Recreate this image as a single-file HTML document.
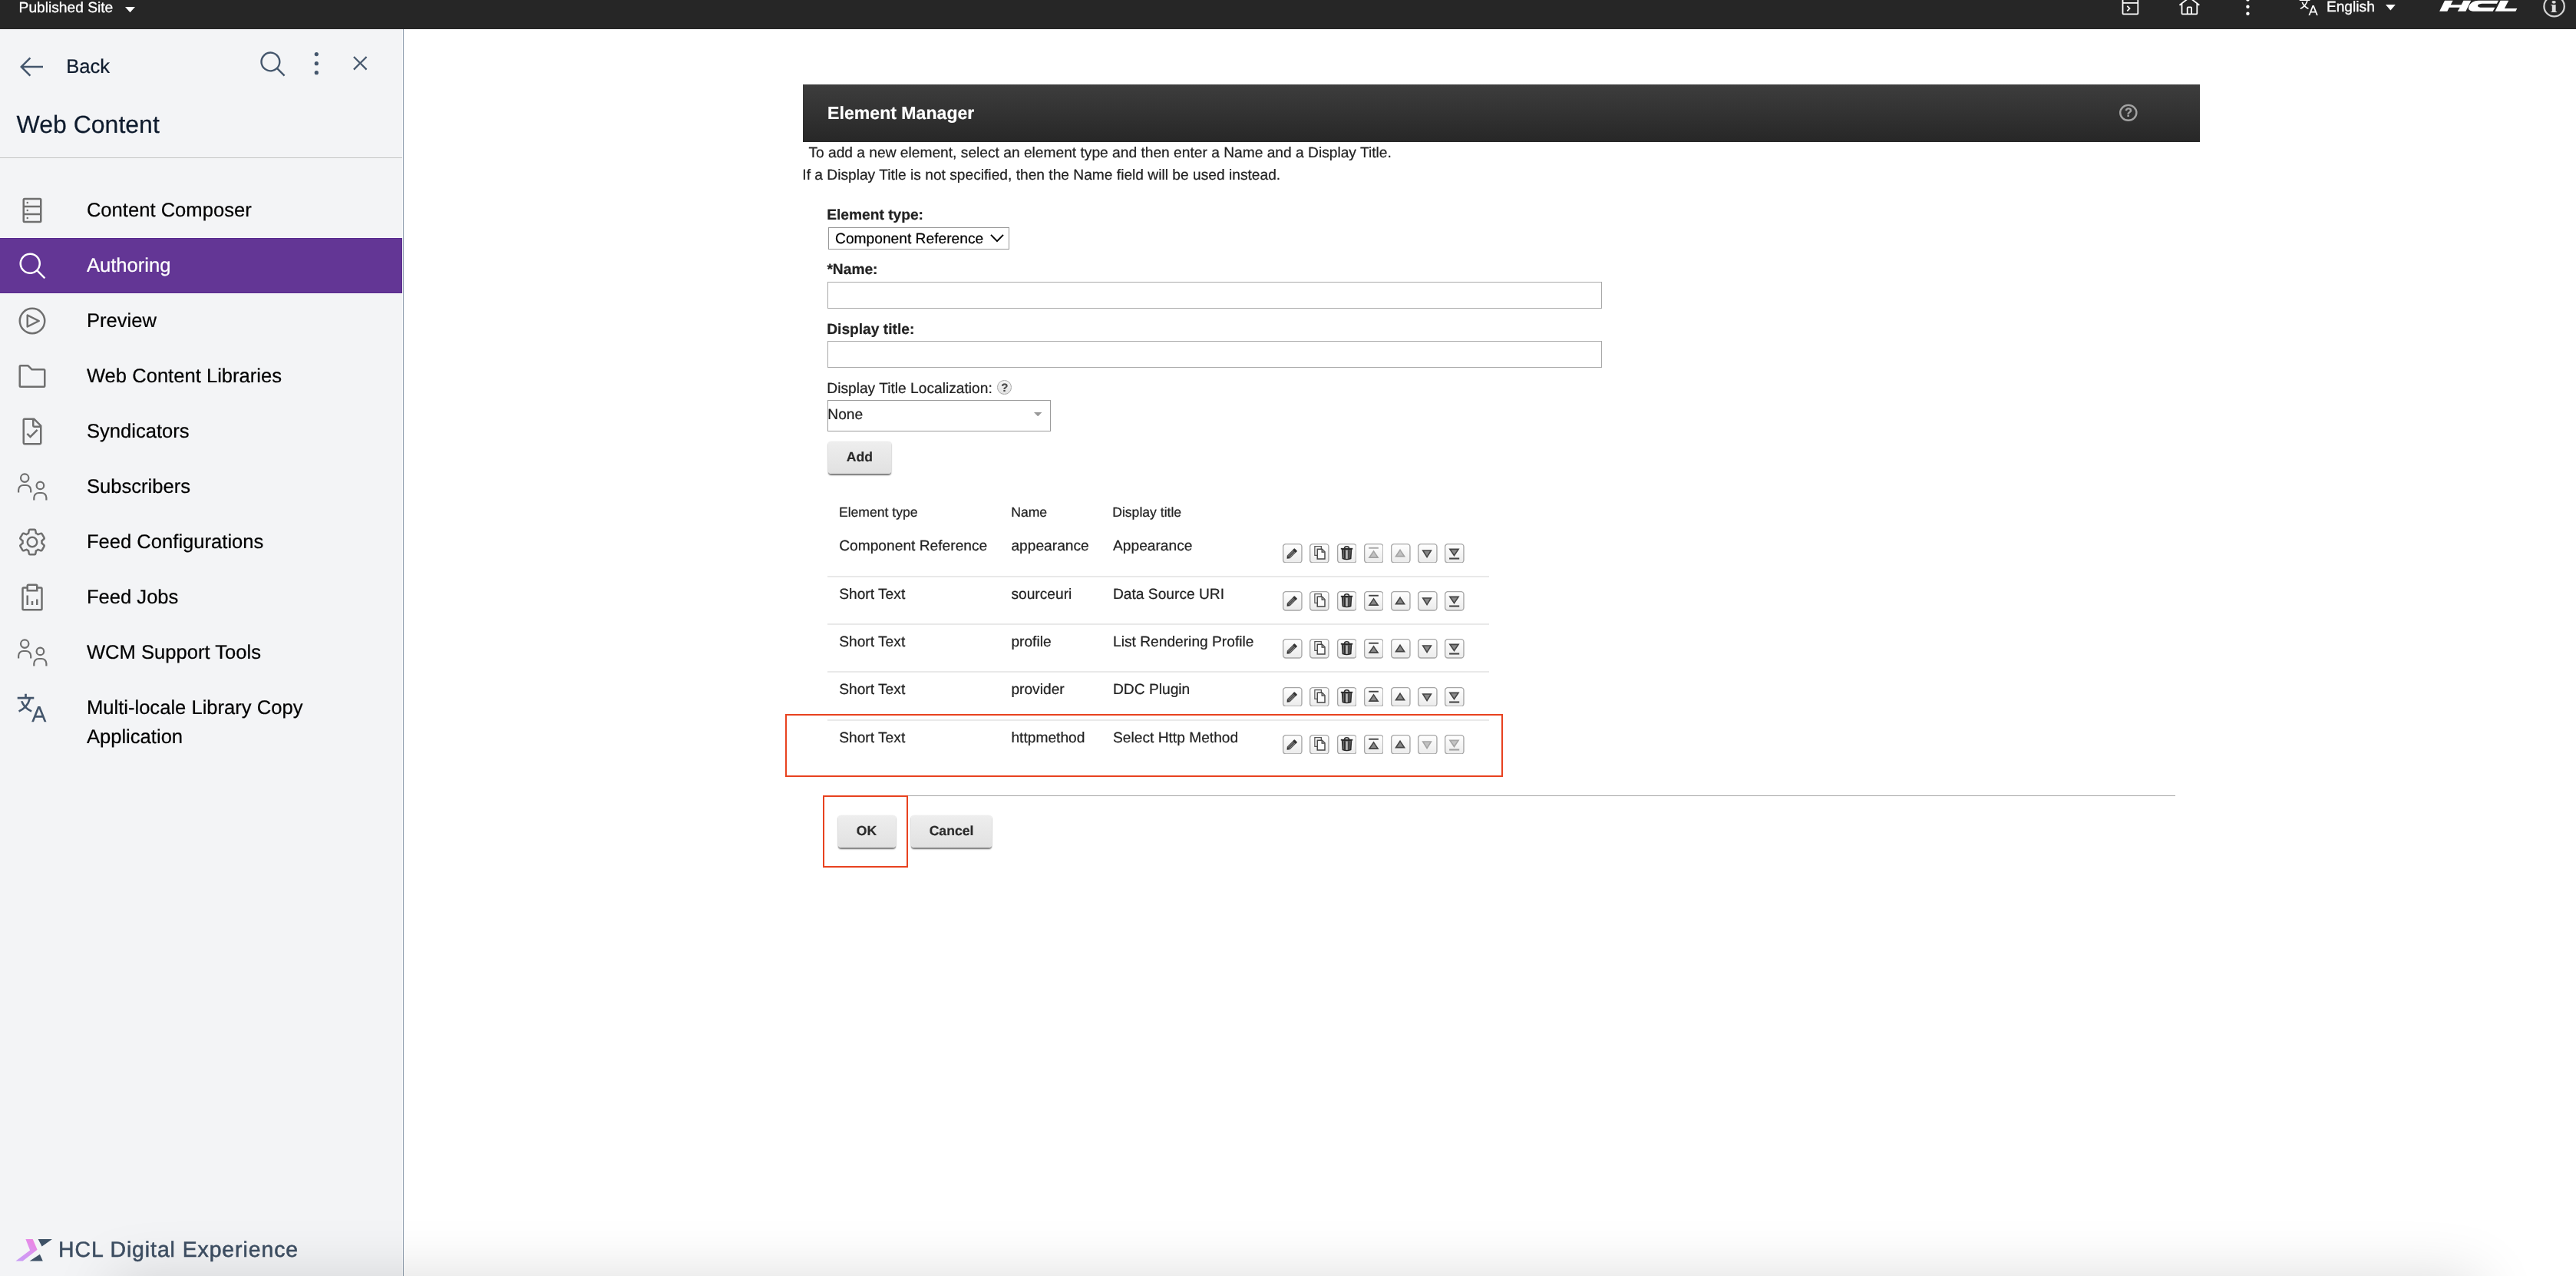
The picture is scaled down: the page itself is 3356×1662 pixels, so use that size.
<!DOCTYPE html>
<html lang="en">
<head>
<meta charset="utf-8">
<title>Element Manager - HCL Digital Experience</title>
<style>
html,body{margin:0;padding:0;}
body{width:3356px;height:1662px;overflow:hidden;position:relative;background:#fff;font-family:"Liberation Sans",sans-serif;color:#222;text-rendering:geometricPrecision;-webkit-text-stroke:0.22px;}
*{box-sizing:border-box;}
.abs{position:absolute;}
#page{position:absolute;left:0;top:0;width:3356px;height:1662px;overflow:hidden;will-change:transform;}
#topbar{position:absolute;left:0;top:0;width:3356px;height:37.6px;background:#262626;overflow:hidden;}
#sidebar{position:absolute;left:0;top:37.6px;width:526.1px;height:1624.4px;background:#f3f4f6;border-right:1.2px solid #93a1b1;box-shadow:inset -0.9px 0 0 #f9fafb;}
#sidebar .row{position:absolute;left:0;width:523px;height:72px;}
#sidebar .row.sel{background:#5f3694;}
.btn{position:absolute;height:42px;border-radius:4px;background:linear-gradient(#eeeeee,#e1e1e1);box-shadow:0 1.6px 1.8px rgba(0,0,0,.55);
 font-weight:bold;font-size:17.6px;color:#2a2a2a;text-shadow:0 1.2px 0 rgba(255,255,255,.85);text-align:center;line-height:40.2px;}
.ib{position:absolute;width:25.6px;height:25.6px;}
.inp{position:absolute;background:#fff;border:1.3px solid #a9a9a9;}
.sep{position:absolute;left:1078px;width:862px;height:2.2px;background:#e9e9e9;}
.red{position:absolute;border:2.2px solid #e8421f;}
</style>
</head>
<body>
<div id="page">

<div id="topbar">
<div class="t" style="position:absolute;left:24.60px;top:-1.17px;font-size:19.2px;line-height:23.04px;color:#fff;white-space:nowrap;-webkit-text-stroke:0.3px #fff;">Published Site</div>
<svg class="abs" style="left:163px;top:8.6px" width="13" height="7.2" viewBox="0 0 13 7.2"><path d="M0 0h13L6.5 7.2z" fill="#fff"/></svg>
<svg style="position:absolute;left:2760.90px;top:-5.90px;" width="28.8" height="28.8" viewBox="0 0 32 32" fill="#fff"><path d="M26,4.01H6a2,2,0,0,0-2,2v20a2,2,0,0,0,2,2H26a2,2,0,0,0,2-2v-20A2,2,0,0,0,26,4.01Zm0,2v4H6v-4Zm-20,20v-14H26v14Z"/><path d="M10.76 16.18L13.58 19.01 10.76 21.84 12.17 23.25 16.41 19.01 12.17 14.77 10.76 16.18z"/></svg>
<svg style="position:absolute;left:2837.70px;top:-5.90px;" width="28.8" height="28.8" viewBox="0 0 32 32" fill="#fff"><path d="M16.612,2.214a1.01,1.01,0,0,0-1.242,0L1,13.419l1.243,1.572L4,13.621V26a2.004,2.004,0,0,0,2,2H26a2.004,2.004,0,0,0,2-2V13.63L29.757,15,31,13.428ZM18,26H14V18h4Zm2,0V18a2.002,2.002,0,0,0-2-2H14a2.002,2.002,0,0,0-2,2v8H6V12.062l10-7.79,10,7.8V26Z"/></svg>
<svg class="abs" style="left:2924px;top:-4px" width="9" height="26" viewBox="0 0 9 26" fill="#fff"><circle cx="4.4" cy="3.6" r="2.2"/><circle cx="4.4" cy="12.7" r="2.2"/><circle cx="4.4" cy="21.8" r="2.2"/></svg>
<svg style="position:absolute;left:2993.60px;top:-5.50px;" width="27.5" height="27.5" viewBox="0 0 32 32" fill="#fff"><path d="M27.85 29H30L24 14H21.65l-6 15H17.8l1.6-4h6.85zM20.2 23l2.62-6.56L25.45 23zM18 7V5H11V2H9V5H2V7H12.74a14.71 14.71 0 0 1-3.19 6.18A13.5 13.5 0 0 1 7.26 9H5.16a16.47 16.47 0 0 0 3 5.58A16.84 16.84 0 0 1 3 18l.75 1.86A18.47 18.47 0 0 0 9.53 16a16.92 16.92 0 0 0 5.76 3.84L16 18a14.48 14.48 0 0 1-5.12-3.37A17.64 17.64 0 0 0 14.8 7z"/></svg>
<div class="t" style="position:absolute;left:3030.90px;top:-1.77px;font-size:19.2px;line-height:23.04px;color:#fff;white-space:nowrap;-webkit-text-stroke:0.3px #fff;">English</div>
<svg class="abs" style="left:3108.2px;top:6.1px" width="12.8" height="7.5" viewBox="0 0 12.8 7.5"><path d="M0 0h12.8L6.4 7.5z" fill="#fff"/></svg>
<svg class="abs" style="left:3160px;top:0" width="140" height="20" viewBox="0 0 1839.6 262.8" fill="#fff"><path d="M238 195L328 10H468L430 82H612L650 10H778L688 195H548L588 128H405L372 195Z"/><path d="M905 10H1248L1221 62H985C925 62 899 74 894 96C891 120 920 129 975 129H1188L1152 195H840C752 195 722 162 742 112C765 48 830 10 905 10Z"/><path d="M1190 195L1282 10H1422L1352 145H1568L1542 195Z"/></svg>
<svg class="abs" style="left:3311px;top:-8px" width="34" height="34" viewBox="0 0 34 34"><circle cx="16.6" cy="16.2" r="13.2" fill="none" stroke="#d2d2d2" stroke-width="2.3"/></svg>
<div class="abs" style="left:3320.4px;top:-5.4px;width:14px;text-align:center;font-family:'Liberation Serif',serif;font-weight:bold;font-size:21.5px;line-height:28px;color:#dcdcdc;transform:scaleX(1.45);">i</div>
</div>
<div id="sidebar">
</div>
<svg style="position:absolute;left:21.20px;top:67.00px;" width="40" height="40" viewBox="0 0 32 32" fill="#44566c"><path d="M14 26L15.41 24.59 7.83 17 28 17 28 15 7.83 15 15.41 7.41 14 6 4 16 14 26z"/></svg>
<div class="t" style="position:absolute;left:86.20px;top:72.17px;font-size:25.6px;line-height:30.72px;color:#0e1b2d;white-space:nowrap;">Back</div>
<svg style="position:absolute;left:336.80px;top:65.20px;" width="38" height="38" viewBox="0 0 32 32" fill="#44566c"><path d="M29,27.5859l-7.5521-7.5521a11.0177,11.0177,0,1,0-1.4141,1.4141L27.5859,29ZM4,13a9,9,0,1,1,9,9A9.01,9.01,0,0,1,4,13Z"/></svg>
<svg class="abs" style="left:407px;top:66px" width="11" height="33" viewBox="0 0 11 33" fill="#44566c"><circle cx="5.3" cy="4.6" r="2.6"/><circle cx="5.3" cy="16.7" r="2.6"/><circle cx="5.3" cy="28.7" r="2.6"/></svg>
<svg style="position:absolute;left:451.15px;top:64.40px;" width="36.5" height="36.5" viewBox="0 0 32 32" fill="#44566c"><path d="M24 9.4L22.6 8 16 14.6 9.4 8 8 9.4 14.6 16 8 22.6 9.4 24 16 17.4 22.6 24 24 22.6 17.4 16 24 9.4z"/></svg>
<div class="t" style="position:absolute;left:21.60px;top:142.81px;font-size:32px;line-height:38.4px;color:#0e1b2d;white-space:nowrap;">Web Content</div>
<div class="abs" style="left:0;top:204.9px;width:524px;height:1.1px;background:#c5c5c5"></div>
<div class="abs" style="left:0;top:309px;width:523.8px;height:73.9px;background:#633695;border-top:1px solid #fcfcfd;border-bottom:1.1px solid #fcfcfd;box-shadow:inset -1px 0 0 #57298d,inset 0 1px 0 #57298d,inset 0 -1px 0 #57298d;"></div>
<svg style="position:absolute;left:22.20px;top:254.00px;" width="40" height="40" viewBox="0 0 32 32" fill="#6f6f6f"><path d="M24,3H8A2,2,0,0,0,6,5V27a2,2,0,0,0,2,2H24a2,2,0,0,0,2-2V5A2,2,0,0,0,24,3Zm0,2v6H8V5ZM8,19V13H24v6Zm0,8V21H24v6Z"/><circle cx="11" cy="8" r="1"/><circle cx="11" cy="16" r="1"/><circle cx="11" cy="24" r="1"/></svg>
<div class="t" style="position:absolute;left:112.90px;top:258.97px;font-size:25.6px;line-height:30.72px;color:#000;white-space:nowrap;">Content Composer</div>
<svg style="position:absolute;left:23.30px;top:327.40px;" width="40" height="40" viewBox="0 0 32 32" fill="#fff"><path d="M29,27.5859l-7.5521-7.5521a11.0177,11.0177,0,1,0-1.4141,1.4141L27.5859,29ZM4,13a9,9,0,1,1,9,9A9.01,9.01,0,0,1,4,13Z"/></svg>
<div class="t" style="position:absolute;left:112.90px;top:330.97px;font-size:25.6px;line-height:30.72px;color:#fff;white-space:nowrap;">Authoring</div>
<svg style="position:absolute;left:22.20px;top:398.00px;" width="40" height="40" viewBox="0 0 32 32" fill="#6f6f6f"><path d="M11,23a1,1,0,0,1-1-1V10a1,1,0,0,1,1.4473-.8945l12,6a1,1,0,0,1,0,1.789l-12,6A1.001,1.001,0,0,1,11,23Zm1-11.3821v8.7642L20.7642,16Z"/><path d="M16,4A12,12,0,1,1,4,16,12,12,0,0,1,16,4m0-2A14,14,0,1,0,30,16,14,14,0,0,0,16,2Z"/></svg>
<div class="t" style="position:absolute;left:112.90px;top:402.97px;font-size:25.6px;line-height:30.72px;color:#000;white-space:nowrap;">Preview</div>
<svg style="position:absolute;left:22.20px;top:470.00px;" width="40" height="40" viewBox="0 0 32 32" fill="#6f6f6f"><path d="M11.17,6l3.42,3.41.58.59H28V26H4V6h7.17m0-2H4A2,2,0,0,0,2,6V26a2,2,0,0,0,2,2H28a2,2,0,0,0,2-2V10a2,2,0,0,0-2-2H16L12.59,4.59A2,2,0,0,0,11.17,4Z"/></svg>
<div class="t" style="position:absolute;left:112.90px;top:474.97px;font-size:25.6px;line-height:30.72px;color:#000;white-space:nowrap;">Web Content Libraries</div>
<svg style="position:absolute;left:22.20px;top:542.00px;" width="40" height="40" viewBox="0 0 32 32" fill="#6f6f6f"><path d="M14 20.18L11.41 17.59 10 19 14 23 22 15 20.59 13.59 14 20.18z"/><path d="M25.7,9.3l-7-7A.908.908,0,0,0,18,2H8A2.006,2.006,0,0,0,6,4V28a2.006,2.006,0,0,0,2,2H24a2.006,2.006,0,0,0,2-2V10A.908.908,0,0,0,25.7,9.3ZM18,4.4,23.6,10H18ZM24,28H8V4h8v6a2.006,2.006,0,0,0,2,2h6Z"/></svg>
<div class="t" style="position:absolute;left:112.90px;top:546.97px;font-size:25.6px;line-height:30.72px;color:#000;white-space:nowrap;">Syndicators</div>
<svg style="position:absolute;left:21.90px;top:615.20px" width="42" height="40" viewBox="0 0 42 40" fill="none" stroke="#6f6f6f" stroke-width="2.2"><circle cx="10.2" cy="7.6" r="5.2"/><path d="M2.1 26.6v-3.4a6.2 6.2 0 0 1 6.2-6.2h3.7a6.2 6.2 0 0 1 6.2 6.2v3.4"/><circle cx="30.4" cy="17.4" r="4.8"/><path d="M22.3 36.6v-3.4a6.2 6.2 0 0 1 6.2-6.2h3.7a6.2 6.2 0 0 1 6.2 6.2v3.4"/></svg>
<div class="t" style="position:absolute;left:112.90px;top:618.97px;font-size:25.6px;line-height:30.72px;color:#000;white-space:nowrap;">Subscribers</div>
<svg style="position:absolute;left:22.20px;top:686.00px;" width="40" height="40" viewBox="0 0 32 32" fill="#6f6f6f"><path d="M27,16.76c0-.25,0-.5,0-.76s0-.51,0-.77l1.92-1.68A2,2,0,0,0,29.3,11L26.94,7a2,2,0,0,0-1.73-1,2,2,0,0,0-.64.1l-2.43.82a11.35,11.35,0,0,0-1.31-.75l-.51-2.52a2,2,0,0,0-2-1.61H13.64a2,2,0,0,0-2,1.61l-.51,2.52a11.48,11.48,0,0,0-1.32.75L7.43,6.06A2,2,0,0,0,6.79,6,2,2,0,0,0,5.06,7L2.7,11a2,2,0,0,0,.41,2.51L5,15.24c0,.25,0,.5,0,.76s0,.51,0,.77L3.11,18.45A2,2,0,0,0,2.7,21L5.06,25a2,2,0,0,0,1.73,1,2,2,0,0,0,.64-.1l2.43-.82a11.35,11.35,0,0,0,1.31.75l.51,2.52a2,2,0,0,0,2,1.61h4.72a2,2,0,0,0,2-1.61l.51-2.52a11.48,11.48,0,0,0,1.32-.75l2.42.82a2,2,0,0,0,.64.1,2,2,0,0,0,1.73-1L29.3,21a2,2,0,0,0-.41-2.51ZM25.21,24l-3.43-1.16a8.86,8.86,0,0,1-2.71,1.57L18.36,28H13.64l-.71-3.55a9.36,9.36,0,0,1-2.7-1.57L6.79,24,4.43,20l2.72-2.4a8.9,8.9,0,0,1,0-3.13L4.43,12,6.79,8l3.43,1.16a8.86,8.86,0,0,1,2.71-1.57L13.64,4h4.72l.71,3.55a9.36,9.36,0,0,1,2.7,1.57L25.21,8,27.57,12l-2.72,2.4a8.9,8.9,0,0,1,0,3.13L27.57,20Z"/><path d="M16,22a6,6,0,1,1,6-6A5.94,5.94,0,0,1,16,22Zm0-10a3.91,3.91,0,0,0-4,4,3.91,3.91,0,0,0,4,4,3.91,3.91,0,0,0,4-4A3.91,3.91,0,0,0,16,12Z"/></svg>
<div class="t" style="position:absolute;left:112.90px;top:690.97px;font-size:25.6px;line-height:30.72px;color:#000;white-space:nowrap;">Feed Configurations</div>
<svg style="position:absolute;left:22.20px;top:758.00px;" width="40" height="40" viewBox="0 0 32 32" fill="#6f6f6f"><path d="M15 20H17V24H15zM20 18H22V24H20zM10 14H12V24H10z"/><path d="M25,5H22V4a2,2,0,0,0-2-2H12a2,2,0,0,0-2,2V5H7A2,2,0,0,0,5,7V28a2,2,0,0,0,2,2H25a2,2,0,0,0,2-2V7A2,2,0,0,0,25,5ZM12,4h8V8H12ZM25,28H7V7h3v3H22V7h3Z"/></svg>
<div class="t" style="position:absolute;left:112.90px;top:762.97px;font-size:25.6px;line-height:30.72px;color:#000;white-space:nowrap;">Feed Jobs</div>
<svg style="position:absolute;left:21.90px;top:831.20px" width="42" height="40" viewBox="0 0 42 40" fill="none" stroke="#6f6f6f" stroke-width="2.2"><circle cx="10.2" cy="7.6" r="5.2"/><path d="M2.1 26.6v-3.4a6.2 6.2 0 0 1 6.2-6.2h3.7a6.2 6.2 0 0 1 6.2 6.2v3.4"/><circle cx="30.4" cy="17.4" r="4.8"/><path d="M22.3 36.6v-3.4a6.2 6.2 0 0 1 6.2-6.2h3.7a6.2 6.2 0 0 1 6.2 6.2v3.4"/></svg>
<div class="t" style="position:absolute;left:112.90px;top:834.97px;font-size:25.6px;line-height:30.72px;color:#000;white-space:nowrap;">WCM Support Tools</div>
<svg style="position:absolute;left:20.20px;top:901.40px;" width="43.2" height="43.2" viewBox="0 0 32 32" fill="#44566c"><path d="M27.85 29H30L24 14H21.65l-6 15H17.8l1.6-4h6.85zM20.2 23l2.62-6.56L25.45 23zM18 7V5H11V2H9V5H2V7H12.74a14.71 14.71 0 0 1-3.19 6.18A13.5 13.5 0 0 1 7.26 9H5.16a16.47 16.47 0 0 0 3 5.58A16.84 16.84 0 0 1 3 18l.75 1.86A18.47 18.47 0 0 0 9.53 16a16.92 16.92 0 0 0 5.76 3.84L16 18a14.48 14.48 0 0 1-5.12-3.37A17.64 17.64 0 0 0 14.8 7z"/></svg>
<div class="t" style="position:absolute;left:112.90px;top:906.97px;font-size:25.6px;line-height:30.72px;color:#000;white-space:nowrap;">Multi-locale Library Copy</div>
<div class="t" style="position:absolute;left:112.90px;top:945.37px;font-size:25.6px;line-height:30.72px;color:#000;white-space:nowrap;">Application</div>
<svg class="abs" style="left:18px;top:1610px" width="56" height="36" viewBox="18 1610 56 36"><defs><linearGradient id="lg" x1="0" y1="1" x2="1" y2="0"><stop offset="0" stop-color="#c79df6"/><stop offset="0.55" stop-color="#d994f0"/><stop offset="1" stop-color="#f57fdc"/></linearGradient></defs><path d="M33.4 1614.1H42.7L48.6 1627.8L29.7 1642.5H20.4L39.1 1628.5Z" fill="url(#lg)"/><path d="M49.7 1614.1H68L54.6 1623.6Z" fill="#3e5166"/><path d="M38.6 1642.5L51.9 1633.8L55.8 1642.5Z" fill="#3e5166"/></svg>
<div class="t" style="position:absolute;left:76.10px;top:1611.22px;font-size:28.4px;line-height:34.08px;color:#3e4f63;white-space:nowrap;letter-spacing:0.93px;-webkit-text-stroke:0.55px #3e4f63;">HCL Digital Experience</div>
<div class="abs" style="left:1046px;top:110px;width:1820px;height:74.6px;background:linear-gradient(#3d3d3d,#272727)"></div>
<h1 class="t" style="position:absolute;left:1078.10px;top:133.74px;font-size:23.1px;line-height:27.72px;color:#fff;white-space:nowrap;font-weight:bold;margin:0;">Element Manager</h1>
<svg class="abs" style="left:2759px;top:133px" width="28" height="28" viewBox="0 0 28 28"><ellipse cx="13.8" cy="13.8" rx="10.6" ry="9.9" fill="none" stroke="#a2a2a2" stroke-width="2.4"/></svg>
<div class="t" style="position:absolute;left:2767.90px;top:137.58px;font-size:16.5px;line-height:19.8px;color:#a2a2a2;white-space:nowrap;font-weight:bold;">?</div>
<div class="t" style="position:absolute;left:1053.40px;top:187.73px;font-size:19.2px;line-height:23.04px;color:#222;white-space:nowrap;">To add a new element, select an element type and then enter a Name and a Display Title.</div>
<div class="t" style="position:absolute;left:1045.30px;top:217.13px;font-size:19.2px;line-height:23.04px;color:#222;white-space:nowrap;">If a Display Title is not specified, then the Name field will be used instead.</div>
<label class="t" style="position:absolute;left:1077.20px;top:269.33px;font-size:19.2px;line-height:23.04px;color:#222;white-space:nowrap;font-weight:bold;">Element type:</label>
<div class="inp" style="left:1079.2px;top:296.4px;width:235.4px;height:28.3px;border:1.2px solid #979797;"></div>
<div class="t" style="position:absolute;left:1088.10px;top:299.83px;font-size:19.2px;line-height:23.04px;color:#000;white-space:nowrap;">Component Reference</div>
<svg class="abs" style="left:1288px;top:303px" width="22" height="14" viewBox="0 0 22 14"><path d="M3 2.8L11 11.2L19 2.8" fill="none" stroke="#000" stroke-width="1.9"/></svg>
<label class="t" style="position:absolute;left:1077.40px;top:340.33px;font-size:19.2px;line-height:23.04px;color:#222;white-space:nowrap;font-weight:bold;">*Name:</label>
<div class="inp" style="left:1078.2px;top:367.2px;width:1008.6px;height:34.4px;"></div>
<label class="t" style="position:absolute;left:1077.20px;top:417.83px;font-size:19.2px;line-height:23.04px;color:#222;white-space:nowrap;font-weight:bold;">Display title:</label>
<div class="inp" style="left:1078.2px;top:443.9px;width:1008.6px;height:34.7px;"></div>
<label class="t" style="position:absolute;left:1077.30px;top:495.13px;font-size:19.2px;line-height:23.04px;color:#222;white-space:nowrap;">Display Title Localization:</label>
<div class="abs" style="left:1299.1px;top:495px;width:18.8px;height:18.8px;border-radius:50%;border:1.3px solid #a8a8a8;background:linear-gradient(#f4f4f4,#e2e2e2);"></div>
<div class="t" style="position:absolute;left:1304.20px;top:497.40px;font-size:15px;line-height:18.0px;color:#4a4a4a;white-space:nowrap;font-weight:bold;">?</div>
<div class="inp" style="left:1078.2px;top:521.2px;width:290.7px;height:40.4px;border-color:#9b9b9b;"></div>
<div class="t" style="position:absolute;left:1078.30px;top:529.23px;font-size:19.2px;line-height:23.04px;color:#222;white-space:nowrap;">None</div>
<svg class="abs" style="left:1347.4px;top:536.7px" width="10.4" height="5.4" viewBox="0 0 10.4 5.4"><path d="M0 0h10.4L5.2 5.4z" fill="#999"/></svg>
<div class="btn" style="left:1078.5px;top:575px;width:82.8px;">Add</div>
<div class="t" style="position:absolute;left:1092.90px;top:657.24px;font-size:17.6px;line-height:21.12px;color:#222;white-space:nowrap;">Element type</div>
<div class="t" style="position:absolute;left:1317.20px;top:657.24px;font-size:17.6px;line-height:21.12px;color:#222;white-space:nowrap;">Name</div>
<div class="t" style="position:absolute;left:1449.20px;top:657.24px;font-size:17.6px;line-height:21.12px;color:#222;white-space:nowrap;">Display title</div>
<div class="t" style="position:absolute;left:1093.20px;top:699.63px;font-size:19.2px;line-height:23.04px;color:#222;white-space:nowrap;">Component Reference</div>
<div class="t" style="position:absolute;left:1317.40px;top:699.63px;font-size:19.2px;line-height:23.04px;color:#222;white-space:nowrap;">appearance</div>
<div class="t" style="position:absolute;left:1450.00px;top:699.63px;font-size:19.2px;line-height:23.04px;color:#222;white-space:nowrap;">Appearance</div>
<svg class="ib" style="left:1671.20px;top:707.80px" viewBox="0 0 16 16"><defs><linearGradient id="bg1" x1="0" y1="0" x2="0" y2="1"><stop offset="0" stop-color="#ffffff"/><stop offset="1" stop-color="#ebebeb"/></linearGradient></defs><rect x="0.4" y="0.4" width="15.2" height="15.2" rx="2.2" fill="url(#bg1)" stroke="#a6a6a6" stroke-width="0.85"/><g transform="rotate(-45 7.7 8)"><rect x="3.6" y="6.4" width="8.2" height="3.3" fill="#505050"/><path d="M3.6 6.4L1.7 8.05L3.6 9.7Z" fill="#2e2e2e"/><rect x="10.2" y="6.5" width="1.8" height="3.1" rx="0.4" fill="#333"/><path d="M4.2 7.3H10M4.2 8.8H10" stroke="#999" stroke-width="0.45"/></g></svg>
<svg class="ib" style="left:1706.40px;top:707.80px" viewBox="0 0 16 16"><defs><linearGradient id="bg2" x1="0" y1="0" x2="0" y2="1"><stop offset="0" stop-color="#ffffff"/><stop offset="1" stop-color="#ebebeb"/></linearGradient></defs><rect x="0.4" y="0.4" width="15.2" height="15.2" rx="2.2" fill="url(#bg2)" stroke="#a6a6a6" stroke-width="0.85"/><path d="M4.3 2.3H9.6V9.6H4.3Z" fill="#fbfbfb" stroke="#555" stroke-width="0.8"/><path d="M6.4 4.5H10.3L12.5 6.8V12.5H6.4Z" fill="#fbfbfb" stroke="#444" stroke-width="0.9"/><path d="M10.1 4.6V7H12.4" fill="#bbb" stroke="#444" stroke-width="0.8"/></svg>
<svg class="ib" style="left:1741.60px;top:707.80px" viewBox="0 0 16 16"><defs><linearGradient id="bg3" x1="0" y1="0" x2="0" y2="1"><stop offset="0" stop-color="#ffffff"/><stop offset="1" stop-color="#ebebeb"/></linearGradient></defs><rect x="0.4" y="0.4" width="15.2" height="15.2" rx="2.2" fill="url(#bg3)" stroke="#a6a6a6" stroke-width="0.85"/><path d="M4.1 4.6H11.6L11.1 12.2Q7.85 13.3 4.6 12.2Z" fill="#6a6a6a" stroke="#262626" stroke-width="0.95"/><path d="M6.1 5.2V12.2M9.6 5.2V12.2" stroke="#2e2e2e" stroke-width="1"/><path d="M7.3 5.4H8.5V12.4H7.3Z" fill="#c8c8c8"/><path d="M3 4.2H12.7" stroke="#2e2e2e" stroke-width="1.1"/><path d="M6 3.8Q6 2.3 7.85 2.3Q9.7 2.3 9.7 3.8" fill="none" stroke="#2e2e2e" stroke-width="1"/></svg>
<svg class="ib" style="left:1776.80px;top:707.80px" viewBox="0 0 16 16"><defs><linearGradient id="bg4" x1="0" y1="0" x2="0" y2="1"><stop offset="0" stop-color="#ffffff"/><stop offset="1" stop-color="#ebebeb"/></linearGradient></defs><rect x="0.4" y="0.4" width="15.2" height="15.2" rx="2.2" fill="url(#bg4)" stroke="#a6a6a6" stroke-width="0.85"/><g opacity="0.46"><path d="M3.9 3.6H11.8" stroke="#444" stroke-width="1.2"/><path d="M7.85 6.2L11.3 11.3H4.4Z" fill="#888" stroke="#444" stroke-width="1" stroke-linejoin="miter"/></g></svg>
<svg class="ib" style="left:1812.00px;top:707.80px" viewBox="0 0 16 16"><defs><linearGradient id="bg5" x1="0" y1="0" x2="0" y2="1"><stop offset="0" stop-color="#ffffff"/><stop offset="1" stop-color="#ebebeb"/></linearGradient></defs><rect x="0.4" y="0.4" width="15.2" height="15.2" rx="2.2" fill="url(#bg5)" stroke="#a6a6a6" stroke-width="0.85"/><g opacity="0.46"><path d="M7.55 5.2L11 10.4H4.1Z" fill="#888" stroke="#444" stroke-width="1"/></g></svg>
<svg class="ib" style="left:1847.20px;top:707.80px" viewBox="0 0 16 16"><defs><linearGradient id="bg6" x1="0" y1="0" x2="0" y2="1"><stop offset="0" stop-color="#ffffff"/><stop offset="1" stop-color="#ebebeb"/></linearGradient></defs><rect x="0.4" y="0.4" width="15.2" height="15.2" rx="2.2" fill="url(#bg6)" stroke="#a6a6a6" stroke-width="0.85"/><path d="M7.55 11L4.2 5.6H10.9Z" fill="#888" stroke="#444" stroke-width="1"/></svg>
<svg class="ib" style="left:1882.40px;top:707.80px" viewBox="0 0 16 16"><defs><linearGradient id="bg7" x1="0" y1="0" x2="0" y2="1"><stop offset="0" stop-color="#ffffff"/><stop offset="1" stop-color="#ebebeb"/></linearGradient></defs><rect x="0.4" y="0.4" width="15.2" height="15.2" rx="2.2" fill="url(#bg7)" stroke="#a6a6a6" stroke-width="0.85"/><path d="M3.8 12.2H12" stroke="#444" stroke-width="1.3"/><path d="M7.8 9.7L4.3 4.6H11.3Z" fill="#888" stroke="#444" stroke-width="1"/></svg>
<div class="t" style="position:absolute;left:1093.20px;top:762.53px;font-size:19.2px;line-height:23.04px;color:#222;white-space:nowrap;">Short Text</div>
<div class="t" style="position:absolute;left:1317.40px;top:762.53px;font-size:19.2px;line-height:23.04px;color:#222;white-space:nowrap;">sourceuri</div>
<div class="t" style="position:absolute;left:1450.00px;top:762.53px;font-size:19.2px;line-height:23.04px;color:#222;white-space:nowrap;">Data Source URI</div>
<svg class="ib" style="left:1671.20px;top:770.10px" viewBox="0 0 16 16"><defs><linearGradient id="bg8" x1="0" y1="0" x2="0" y2="1"><stop offset="0" stop-color="#ffffff"/><stop offset="1" stop-color="#ebebeb"/></linearGradient></defs><rect x="0.4" y="0.4" width="15.2" height="15.2" rx="2.2" fill="url(#bg8)" stroke="#a6a6a6" stroke-width="0.85"/><g transform="rotate(-45 7.7 8)"><rect x="3.6" y="6.4" width="8.2" height="3.3" fill="#505050"/><path d="M3.6 6.4L1.7 8.05L3.6 9.7Z" fill="#2e2e2e"/><rect x="10.2" y="6.5" width="1.8" height="3.1" rx="0.4" fill="#333"/><path d="M4.2 7.3H10M4.2 8.8H10" stroke="#999" stroke-width="0.45"/></g></svg>
<svg class="ib" style="left:1706.40px;top:770.10px" viewBox="0 0 16 16"><defs><linearGradient id="bg9" x1="0" y1="0" x2="0" y2="1"><stop offset="0" stop-color="#ffffff"/><stop offset="1" stop-color="#ebebeb"/></linearGradient></defs><rect x="0.4" y="0.4" width="15.2" height="15.2" rx="2.2" fill="url(#bg9)" stroke="#a6a6a6" stroke-width="0.85"/><path d="M4.3 2.3H9.6V9.6H4.3Z" fill="#fbfbfb" stroke="#555" stroke-width="0.8"/><path d="M6.4 4.5H10.3L12.5 6.8V12.5H6.4Z" fill="#fbfbfb" stroke="#444" stroke-width="0.9"/><path d="M10.1 4.6V7H12.4" fill="#bbb" stroke="#444" stroke-width="0.8"/></svg>
<svg class="ib" style="left:1741.60px;top:770.10px" viewBox="0 0 16 16"><defs><linearGradient id="bg10" x1="0" y1="0" x2="0" y2="1"><stop offset="0" stop-color="#ffffff"/><stop offset="1" stop-color="#ebebeb"/></linearGradient></defs><rect x="0.4" y="0.4" width="15.2" height="15.2" rx="2.2" fill="url(#bg10)" stroke="#a6a6a6" stroke-width="0.85"/><path d="M4.1 4.6H11.6L11.1 12.2Q7.85 13.3 4.6 12.2Z" fill="#6a6a6a" stroke="#262626" stroke-width="0.95"/><path d="M6.1 5.2V12.2M9.6 5.2V12.2" stroke="#2e2e2e" stroke-width="1"/><path d="M7.3 5.4H8.5V12.4H7.3Z" fill="#c8c8c8"/><path d="M3 4.2H12.7" stroke="#2e2e2e" stroke-width="1.1"/><path d="M6 3.8Q6 2.3 7.85 2.3Q9.7 2.3 9.7 3.8" fill="none" stroke="#2e2e2e" stroke-width="1"/></svg>
<svg class="ib" style="left:1776.80px;top:770.10px" viewBox="0 0 16 16"><defs><linearGradient id="bg11" x1="0" y1="0" x2="0" y2="1"><stop offset="0" stop-color="#ffffff"/><stop offset="1" stop-color="#ebebeb"/></linearGradient></defs><rect x="0.4" y="0.4" width="15.2" height="15.2" rx="2.2" fill="url(#bg11)" stroke="#a6a6a6" stroke-width="0.85"/><path d="M3.9 3.6H11.8" stroke="#444" stroke-width="1.2"/><path d="M7.85 6.2L11.3 11.3H4.4Z" fill="#888" stroke="#444" stroke-width="1" stroke-linejoin="miter"/></svg>
<svg class="ib" style="left:1812.00px;top:770.10px" viewBox="0 0 16 16"><defs><linearGradient id="bg12" x1="0" y1="0" x2="0" y2="1"><stop offset="0" stop-color="#ffffff"/><stop offset="1" stop-color="#ebebeb"/></linearGradient></defs><rect x="0.4" y="0.4" width="15.2" height="15.2" rx="2.2" fill="url(#bg12)" stroke="#a6a6a6" stroke-width="0.85"/><path d="M7.55 5.2L11 10.4H4.1Z" fill="#888" stroke="#444" stroke-width="1"/></svg>
<svg class="ib" style="left:1847.20px;top:770.10px" viewBox="0 0 16 16"><defs><linearGradient id="bg13" x1="0" y1="0" x2="0" y2="1"><stop offset="0" stop-color="#ffffff"/><stop offset="1" stop-color="#ebebeb"/></linearGradient></defs><rect x="0.4" y="0.4" width="15.2" height="15.2" rx="2.2" fill="url(#bg13)" stroke="#a6a6a6" stroke-width="0.85"/><path d="M7.55 11L4.2 5.6H10.9Z" fill="#888" stroke="#444" stroke-width="1"/></svg>
<svg class="ib" style="left:1882.40px;top:770.10px" viewBox="0 0 16 16"><defs><linearGradient id="bg14" x1="0" y1="0" x2="0" y2="1"><stop offset="0" stop-color="#ffffff"/><stop offset="1" stop-color="#ebebeb"/></linearGradient></defs><rect x="0.4" y="0.4" width="15.2" height="15.2" rx="2.2" fill="url(#bg14)" stroke="#a6a6a6" stroke-width="0.85"/><path d="M3.8 12.2H12" stroke="#444" stroke-width="1.3"/><path d="M7.8 9.7L4.3 4.6H11.3Z" fill="#888" stroke="#444" stroke-width="1"/></svg>
<div class="t" style="position:absolute;left:1093.20px;top:824.73px;font-size:19.2px;line-height:23.04px;color:#222;white-space:nowrap;">Short Text</div>
<div class="t" style="position:absolute;left:1317.40px;top:824.73px;font-size:19.2px;line-height:23.04px;color:#222;white-space:nowrap;">profile</div>
<div class="t" style="position:absolute;left:1450.00px;top:824.73px;font-size:19.2px;line-height:23.04px;color:#222;white-space:nowrap;">List Rendering Profile</div>
<svg class="ib" style="left:1671.20px;top:832.20px" viewBox="0 0 16 16"><defs><linearGradient id="bg15" x1="0" y1="0" x2="0" y2="1"><stop offset="0" stop-color="#ffffff"/><stop offset="1" stop-color="#ebebeb"/></linearGradient></defs><rect x="0.4" y="0.4" width="15.2" height="15.2" rx="2.2" fill="url(#bg15)" stroke="#a6a6a6" stroke-width="0.85"/><g transform="rotate(-45 7.7 8)"><rect x="3.6" y="6.4" width="8.2" height="3.3" fill="#505050"/><path d="M3.6 6.4L1.7 8.05L3.6 9.7Z" fill="#2e2e2e"/><rect x="10.2" y="6.5" width="1.8" height="3.1" rx="0.4" fill="#333"/><path d="M4.2 7.3H10M4.2 8.8H10" stroke="#999" stroke-width="0.45"/></g></svg>
<svg class="ib" style="left:1706.40px;top:832.20px" viewBox="0 0 16 16"><defs><linearGradient id="bg16" x1="0" y1="0" x2="0" y2="1"><stop offset="0" stop-color="#ffffff"/><stop offset="1" stop-color="#ebebeb"/></linearGradient></defs><rect x="0.4" y="0.4" width="15.2" height="15.2" rx="2.2" fill="url(#bg16)" stroke="#a6a6a6" stroke-width="0.85"/><path d="M4.3 2.3H9.6V9.6H4.3Z" fill="#fbfbfb" stroke="#555" stroke-width="0.8"/><path d="M6.4 4.5H10.3L12.5 6.8V12.5H6.4Z" fill="#fbfbfb" stroke="#444" stroke-width="0.9"/><path d="M10.1 4.6V7H12.4" fill="#bbb" stroke="#444" stroke-width="0.8"/></svg>
<svg class="ib" style="left:1741.60px;top:832.20px" viewBox="0 0 16 16"><defs><linearGradient id="bg17" x1="0" y1="0" x2="0" y2="1"><stop offset="0" stop-color="#ffffff"/><stop offset="1" stop-color="#ebebeb"/></linearGradient></defs><rect x="0.4" y="0.4" width="15.2" height="15.2" rx="2.2" fill="url(#bg17)" stroke="#a6a6a6" stroke-width="0.85"/><path d="M4.1 4.6H11.6L11.1 12.2Q7.85 13.3 4.6 12.2Z" fill="#6a6a6a" stroke="#262626" stroke-width="0.95"/><path d="M6.1 5.2V12.2M9.6 5.2V12.2" stroke="#2e2e2e" stroke-width="1"/><path d="M7.3 5.4H8.5V12.4H7.3Z" fill="#c8c8c8"/><path d="M3 4.2H12.7" stroke="#2e2e2e" stroke-width="1.1"/><path d="M6 3.8Q6 2.3 7.85 2.3Q9.7 2.3 9.7 3.8" fill="none" stroke="#2e2e2e" stroke-width="1"/></svg>
<svg class="ib" style="left:1776.80px;top:832.20px" viewBox="0 0 16 16"><defs><linearGradient id="bg18" x1="0" y1="0" x2="0" y2="1"><stop offset="0" stop-color="#ffffff"/><stop offset="1" stop-color="#ebebeb"/></linearGradient></defs><rect x="0.4" y="0.4" width="15.2" height="15.2" rx="2.2" fill="url(#bg18)" stroke="#a6a6a6" stroke-width="0.85"/><path d="M3.9 3.6H11.8" stroke="#444" stroke-width="1.2"/><path d="M7.85 6.2L11.3 11.3H4.4Z" fill="#888" stroke="#444" stroke-width="1" stroke-linejoin="miter"/></svg>
<svg class="ib" style="left:1812.00px;top:832.20px" viewBox="0 0 16 16"><defs><linearGradient id="bg19" x1="0" y1="0" x2="0" y2="1"><stop offset="0" stop-color="#ffffff"/><stop offset="1" stop-color="#ebebeb"/></linearGradient></defs><rect x="0.4" y="0.4" width="15.2" height="15.2" rx="2.2" fill="url(#bg19)" stroke="#a6a6a6" stroke-width="0.85"/><path d="M7.55 5.2L11 10.4H4.1Z" fill="#888" stroke="#444" stroke-width="1"/></svg>
<svg class="ib" style="left:1847.20px;top:832.20px" viewBox="0 0 16 16"><defs><linearGradient id="bg20" x1="0" y1="0" x2="0" y2="1"><stop offset="0" stop-color="#ffffff"/><stop offset="1" stop-color="#ebebeb"/></linearGradient></defs><rect x="0.4" y="0.4" width="15.2" height="15.2" rx="2.2" fill="url(#bg20)" stroke="#a6a6a6" stroke-width="0.85"/><path d="M7.55 11L4.2 5.6H10.9Z" fill="#888" stroke="#444" stroke-width="1"/></svg>
<svg class="ib" style="left:1882.40px;top:832.20px" viewBox="0 0 16 16"><defs><linearGradient id="bg21" x1="0" y1="0" x2="0" y2="1"><stop offset="0" stop-color="#ffffff"/><stop offset="1" stop-color="#ebebeb"/></linearGradient></defs><rect x="0.4" y="0.4" width="15.2" height="15.2" rx="2.2" fill="url(#bg21)" stroke="#a6a6a6" stroke-width="0.85"/><path d="M3.8 12.2H12" stroke="#444" stroke-width="1.3"/><path d="M7.8 9.7L4.3 4.6H11.3Z" fill="#888" stroke="#444" stroke-width="1"/></svg>
<div class="t" style="position:absolute;left:1093.20px;top:886.73px;font-size:19.2px;line-height:23.04px;color:#222;white-space:nowrap;">Short Text</div>
<div class="t" style="position:absolute;left:1317.40px;top:886.73px;font-size:19.2px;line-height:23.04px;color:#222;white-space:nowrap;">provider</div>
<div class="t" style="position:absolute;left:1450.00px;top:886.73px;font-size:19.2px;line-height:23.04px;color:#222;white-space:nowrap;">DDC Plugin</div>
<svg class="ib" style="left:1671.20px;top:894.60px" viewBox="0 0 16 16"><defs><linearGradient id="bg22" x1="0" y1="0" x2="0" y2="1"><stop offset="0" stop-color="#ffffff"/><stop offset="1" stop-color="#ebebeb"/></linearGradient></defs><rect x="0.4" y="0.4" width="15.2" height="15.2" rx="2.2" fill="url(#bg22)" stroke="#a6a6a6" stroke-width="0.85"/><g transform="rotate(-45 7.7 8)"><rect x="3.6" y="6.4" width="8.2" height="3.3" fill="#505050"/><path d="M3.6 6.4L1.7 8.05L3.6 9.7Z" fill="#2e2e2e"/><rect x="10.2" y="6.5" width="1.8" height="3.1" rx="0.4" fill="#333"/><path d="M4.2 7.3H10M4.2 8.8H10" stroke="#999" stroke-width="0.45"/></g></svg>
<svg class="ib" style="left:1706.40px;top:894.60px" viewBox="0 0 16 16"><defs><linearGradient id="bg23" x1="0" y1="0" x2="0" y2="1"><stop offset="0" stop-color="#ffffff"/><stop offset="1" stop-color="#ebebeb"/></linearGradient></defs><rect x="0.4" y="0.4" width="15.2" height="15.2" rx="2.2" fill="url(#bg23)" stroke="#a6a6a6" stroke-width="0.85"/><path d="M4.3 2.3H9.6V9.6H4.3Z" fill="#fbfbfb" stroke="#555" stroke-width="0.8"/><path d="M6.4 4.5H10.3L12.5 6.8V12.5H6.4Z" fill="#fbfbfb" stroke="#444" stroke-width="0.9"/><path d="M10.1 4.6V7H12.4" fill="#bbb" stroke="#444" stroke-width="0.8"/></svg>
<svg class="ib" style="left:1741.60px;top:894.60px" viewBox="0 0 16 16"><defs><linearGradient id="bg24" x1="0" y1="0" x2="0" y2="1"><stop offset="0" stop-color="#ffffff"/><stop offset="1" stop-color="#ebebeb"/></linearGradient></defs><rect x="0.4" y="0.4" width="15.2" height="15.2" rx="2.2" fill="url(#bg24)" stroke="#a6a6a6" stroke-width="0.85"/><path d="M4.1 4.6H11.6L11.1 12.2Q7.85 13.3 4.6 12.2Z" fill="#6a6a6a" stroke="#262626" stroke-width="0.95"/><path d="M6.1 5.2V12.2M9.6 5.2V12.2" stroke="#2e2e2e" stroke-width="1"/><path d="M7.3 5.4H8.5V12.4H7.3Z" fill="#c8c8c8"/><path d="M3 4.2H12.7" stroke="#2e2e2e" stroke-width="1.1"/><path d="M6 3.8Q6 2.3 7.85 2.3Q9.7 2.3 9.7 3.8" fill="none" stroke="#2e2e2e" stroke-width="1"/></svg>
<svg class="ib" style="left:1776.80px;top:894.60px" viewBox="0 0 16 16"><defs><linearGradient id="bg25" x1="0" y1="0" x2="0" y2="1"><stop offset="0" stop-color="#ffffff"/><stop offset="1" stop-color="#ebebeb"/></linearGradient></defs><rect x="0.4" y="0.4" width="15.2" height="15.2" rx="2.2" fill="url(#bg25)" stroke="#a6a6a6" stroke-width="0.85"/><path d="M3.9 3.6H11.8" stroke="#444" stroke-width="1.2"/><path d="M7.85 6.2L11.3 11.3H4.4Z" fill="#888" stroke="#444" stroke-width="1" stroke-linejoin="miter"/></svg>
<svg class="ib" style="left:1812.00px;top:894.60px" viewBox="0 0 16 16"><defs><linearGradient id="bg26" x1="0" y1="0" x2="0" y2="1"><stop offset="0" stop-color="#ffffff"/><stop offset="1" stop-color="#ebebeb"/></linearGradient></defs><rect x="0.4" y="0.4" width="15.2" height="15.2" rx="2.2" fill="url(#bg26)" stroke="#a6a6a6" stroke-width="0.85"/><path d="M7.55 5.2L11 10.4H4.1Z" fill="#888" stroke="#444" stroke-width="1"/></svg>
<svg class="ib" style="left:1847.20px;top:894.60px" viewBox="0 0 16 16"><defs><linearGradient id="bg27" x1="0" y1="0" x2="0" y2="1"><stop offset="0" stop-color="#ffffff"/><stop offset="1" stop-color="#ebebeb"/></linearGradient></defs><rect x="0.4" y="0.4" width="15.2" height="15.2" rx="2.2" fill="url(#bg27)" stroke="#a6a6a6" stroke-width="0.85"/><path d="M7.55 11L4.2 5.6H10.9Z" fill="#888" stroke="#444" stroke-width="1"/></svg>
<svg class="ib" style="left:1882.40px;top:894.60px" viewBox="0 0 16 16"><defs><linearGradient id="bg28" x1="0" y1="0" x2="0" y2="1"><stop offset="0" stop-color="#ffffff"/><stop offset="1" stop-color="#ebebeb"/></linearGradient></defs><rect x="0.4" y="0.4" width="15.2" height="15.2" rx="2.2" fill="url(#bg28)" stroke="#a6a6a6" stroke-width="0.85"/><path d="M3.8 12.2H12" stroke="#444" stroke-width="1.3"/><path d="M7.8 9.7L4.3 4.6H11.3Z" fill="#888" stroke="#444" stroke-width="1"/></svg>
<div class="t" style="position:absolute;left:1093.20px;top:950.03px;font-size:19.2px;line-height:23.04px;color:#222;white-space:nowrap;">Short Text</div>
<div class="t" style="position:absolute;left:1317.40px;top:950.03px;font-size:19.2px;line-height:23.04px;color:#222;white-space:nowrap;">httpmethod</div>
<div class="t" style="position:absolute;left:1450.00px;top:950.03px;font-size:19.2px;line-height:23.04px;color:#222;white-space:nowrap;">Select Http Method</div>
<svg class="ib" style="left:1671.20px;top:956.80px" viewBox="0 0 16 16"><defs><linearGradient id="bg29" x1="0" y1="0" x2="0" y2="1"><stop offset="0" stop-color="#ffffff"/><stop offset="1" stop-color="#ebebeb"/></linearGradient></defs><rect x="0.4" y="0.4" width="15.2" height="15.2" rx="2.2" fill="url(#bg29)" stroke="#a6a6a6" stroke-width="0.85"/><g transform="rotate(-45 7.7 8)"><rect x="3.6" y="6.4" width="8.2" height="3.3" fill="#505050"/><path d="M3.6 6.4L1.7 8.05L3.6 9.7Z" fill="#2e2e2e"/><rect x="10.2" y="6.5" width="1.8" height="3.1" rx="0.4" fill="#333"/><path d="M4.2 7.3H10M4.2 8.8H10" stroke="#999" stroke-width="0.45"/></g></svg>
<svg class="ib" style="left:1706.40px;top:956.80px" viewBox="0 0 16 16"><defs><linearGradient id="bg30" x1="0" y1="0" x2="0" y2="1"><stop offset="0" stop-color="#ffffff"/><stop offset="1" stop-color="#ebebeb"/></linearGradient></defs><rect x="0.4" y="0.4" width="15.2" height="15.2" rx="2.2" fill="url(#bg30)" stroke="#a6a6a6" stroke-width="0.85"/><path d="M4.3 2.3H9.6V9.6H4.3Z" fill="#fbfbfb" stroke="#555" stroke-width="0.8"/><path d="M6.4 4.5H10.3L12.5 6.8V12.5H6.4Z" fill="#fbfbfb" stroke="#444" stroke-width="0.9"/><path d="M10.1 4.6V7H12.4" fill="#bbb" stroke="#444" stroke-width="0.8"/></svg>
<svg class="ib" style="left:1741.60px;top:956.80px" viewBox="0 0 16 16"><defs><linearGradient id="bg31" x1="0" y1="0" x2="0" y2="1"><stop offset="0" stop-color="#ffffff"/><stop offset="1" stop-color="#ebebeb"/></linearGradient></defs><rect x="0.4" y="0.4" width="15.2" height="15.2" rx="2.2" fill="url(#bg31)" stroke="#a6a6a6" stroke-width="0.85"/><path d="M4.1 4.6H11.6L11.1 12.2Q7.85 13.3 4.6 12.2Z" fill="#6a6a6a" stroke="#262626" stroke-width="0.95"/><path d="M6.1 5.2V12.2M9.6 5.2V12.2" stroke="#2e2e2e" stroke-width="1"/><path d="M7.3 5.4H8.5V12.4H7.3Z" fill="#c8c8c8"/><path d="M3 4.2H12.7" stroke="#2e2e2e" stroke-width="1.1"/><path d="M6 3.8Q6 2.3 7.85 2.3Q9.7 2.3 9.7 3.8" fill="none" stroke="#2e2e2e" stroke-width="1"/></svg>
<svg class="ib" style="left:1776.80px;top:956.80px" viewBox="0 0 16 16"><defs><linearGradient id="bg32" x1="0" y1="0" x2="0" y2="1"><stop offset="0" stop-color="#ffffff"/><stop offset="1" stop-color="#ebebeb"/></linearGradient></defs><rect x="0.4" y="0.4" width="15.2" height="15.2" rx="2.2" fill="url(#bg32)" stroke="#a6a6a6" stroke-width="0.85"/><path d="M3.9 3.6H11.8" stroke="#444" stroke-width="1.2"/><path d="M7.85 6.2L11.3 11.3H4.4Z" fill="#888" stroke="#444" stroke-width="1" stroke-linejoin="miter"/></svg>
<svg class="ib" style="left:1812.00px;top:956.80px" viewBox="0 0 16 16"><defs><linearGradient id="bg33" x1="0" y1="0" x2="0" y2="1"><stop offset="0" stop-color="#ffffff"/><stop offset="1" stop-color="#ebebeb"/></linearGradient></defs><rect x="0.4" y="0.4" width="15.2" height="15.2" rx="2.2" fill="url(#bg33)" stroke="#a6a6a6" stroke-width="0.85"/><path d="M7.55 5.2L11 10.4H4.1Z" fill="#888" stroke="#444" stroke-width="1"/></svg>
<svg class="ib" style="left:1847.20px;top:956.80px" viewBox="0 0 16 16"><defs><linearGradient id="bg34" x1="0" y1="0" x2="0" y2="1"><stop offset="0" stop-color="#ffffff"/><stop offset="1" stop-color="#ebebeb"/></linearGradient></defs><rect x="0.4" y="0.4" width="15.2" height="15.2" rx="2.2" fill="url(#bg34)" stroke="#a6a6a6" stroke-width="0.85"/><g opacity="0.46"><path d="M7.55 11L4.2 5.6H10.9Z" fill="#888" stroke="#444" stroke-width="1"/></g></svg>
<svg class="ib" style="left:1882.40px;top:956.80px" viewBox="0 0 16 16"><defs><linearGradient id="bg35" x1="0" y1="0" x2="0" y2="1"><stop offset="0" stop-color="#ffffff"/><stop offset="1" stop-color="#ebebeb"/></linearGradient></defs><rect x="0.4" y="0.4" width="15.2" height="15.2" rx="2.2" fill="url(#bg35)" stroke="#a6a6a6" stroke-width="0.85"/><g opacity="0.46"><path d="M3.8 12.2H12" stroke="#444" stroke-width="1.3"/><path d="M7.8 9.7L4.3 4.6H11.3Z" fill="#888" stroke="#444" stroke-width="1"/></g></svg>
<div class="sep" style="top:750.0px"></div>
<div class="sep" style="top:812.0px"></div>
<div class="sep" style="top:874.2px"></div>
<div class="sep" style="top:936.9px"></div>
<div class="red" style="left:1023px;top:930.1px;width:934.8px;height:81.6px;"></div>
<div class="abs" style="left:1078px;top:1035.6px;width:1756px;height:1.3px;background:#a6a6a6"></div>
<div class="red" style="left:1072.2px;top:1036.2px;width:110.4px;height:93.4px;background:#fff;"></div>
<div class="btn" style="left:1091.5px;top:1062px;width:75px;">OK</div>
<div class="btn" style="left:1186.6px;top:1062px;width:105.8px;">Cancel</div>
<div class="abs" style="left:146px;top:1664px;width:3084px;height:80px;box-shadow:0 0 78px rgba(0,0,0,.145);"></div>
</div>
</body>
</html>
